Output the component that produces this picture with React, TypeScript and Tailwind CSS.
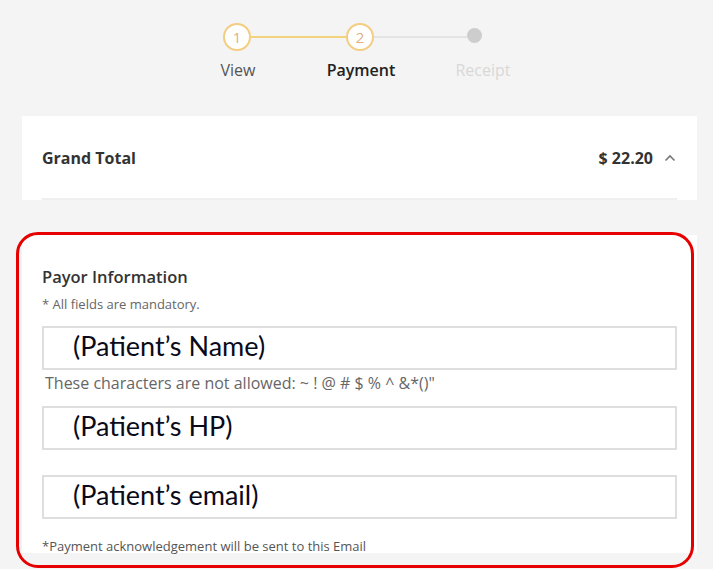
import React from 'react';

const ui = { fontFamily: '"Open Sans", "Liberation Sans", sans-serif' };
const cal = { fontFamily: 'Lato, "Open Sans", sans-serif' };

const Stepper: React.FC = () => (
  <div className="pt-[23px]">
    <div className="flex items-center pl-[223px]">
      <div className="w-[28px] h-[28px] rounded-full border-2 border-[#f3cd80] bg-white flex items-center justify-center text-[15px] text-[#e3b07c] leading-none">
        1
      </div>
      <div className="w-[95px] h-[2px] bg-[#f3d27e]" />
      <div className="w-[28px] h-[28px] rounded-full border-2 border-[#f3cd80] bg-white flex items-center justify-center text-[15px] text-[#e3b07c] leading-none">
        2
      </div>
      <div className="w-[93px] h-[2px] bg-[#e4e4e4]" />
      <div className="w-[15px] h-[15px] rounded-full bg-[#cdcdcd] -mt-[3px]" />
    </div>
    <div className="flex pl-[178px] mt-[9px] text-[16px] leading-[20px]">
      <div className="w-[120px] text-center text-[#555]">View</div>
      <div className="w-[126px] text-center font-semibold text-[#222]">Payment</div>
      <div className="w-[118px] text-center text-[#d8d8d8]">Receipt</div>
    </div>
  </div>
);

const Field: React.FC<{ label: string }> = ({ label }) => (
  <div className="h-[44px] border-2 border-[#dedede] bg-white flex items-center pl-[29px] pb-[5px]">
    <span className="text-[27px] leading-[32px] text-[#0a0a1a]" style={cal}>
      {label}
    </span>
  </div>
);

const App: React.FC = () => {
  return (
    <div className="w-[713px] h-[569px] bg-[#f4f4f4] overflow-hidden" style={ui}>
      <Stepper />

      <div className="ml-[22px] mr-[16px] mt-[36px] h-[84px] bg-white px-5 flex flex-col">
        <div className="flex-1 flex items-center justify-between pt-[2px]">
          <span className="text-[16px] font-bold text-[#333]">Grand Total</span>
          <div className="flex items-center gap-[11px] pr-[1px]">
            <span className="text-[16px] font-bold text-[#333]">$ 22.20</span>
            <svg width="12" height="8" viewBox="0 0 12 8" fill="none" stroke="#777" strokeWidth="1.6">
              <path d="M1.5 6.5 L6 2 L10.5 6.5" />
            </svg>
          </div>
        </div>
        <div className="h-[2px] bg-[#efefef]" />
      </div>

      <div className="relative ml-[22px] mr-[16px] mt-[35px] h-[318px] bg-white px-5 pt-[31px]">
        <div className="text-[16.5px] font-semibold text-[#333] leading-[22px]">Payor Information</div>
        <div className="text-[13px] text-[#666] mt-[8px] leading-[16px]">* All fields are mandatory.</div>

        <div className="mt-[14px]">
          <Field label="(Patient’s Name)" />
        </div>
        <div className="text-[16px] text-[#666] leading-[20px] mt-[3px] pl-[3px]">
          These characters are not allowed: ~ ! @ # $ % ^ &amp;*()"
        </div>

        <div className="mt-[13px]">
          <Field label="(Patient’s HP)" />
        </div>
        <div className="mt-[25px]">
          <Field label="(Patient’s email)" />
        </div>
        <div className="text-[13px] text-[#555] mt-[19px] leading-[16px]">
          *Payment acknowledgement will be sent to this Email
        </div>

        <div className="absolute left-[-6px] top-[-3px] right-[3px] bottom-[-15px] border-[3px] border-[#e60000] rounded-[22px] pointer-events-none" />
      </div>
    </div>
  );
};

export default App;
